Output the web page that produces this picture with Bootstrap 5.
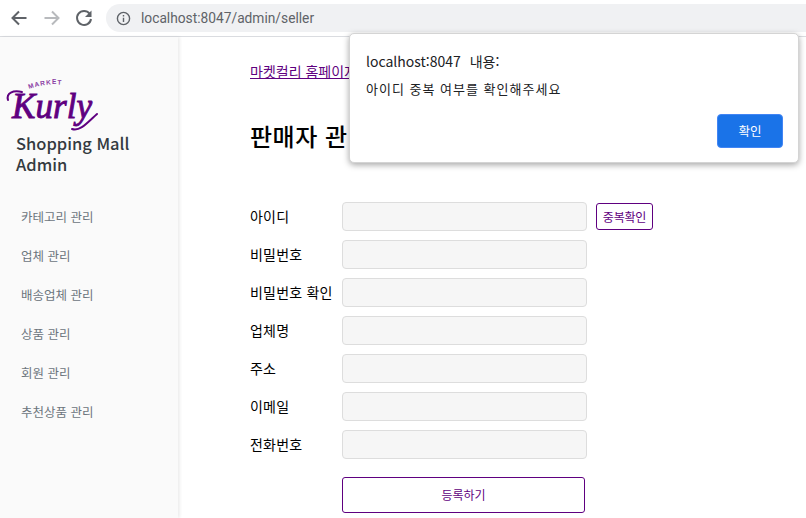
<!DOCTYPE html>
<html lang="ko">
<head>
<meta charset="utf-8">
<title>판매자 관리</title>
<link rel="stylesheet" href="https://cdn.jsdelivr.net/npm/bootstrap@5.3.0/dist/css/bootstrap.min.css">
<style>
html,body{height:518px;overflow:hidden}
body{font-family:"Noto Sans CJK KR","Liberation Sans",sans-serif;background:#fff;color:#000}
.chrome-bar{height:37px;border-bottom:1px solid #dadce0;background:#fff;padding-left:9px}
.nav-ico{width:20px;height:20px;flex:none}
.nav-fwd{margin-left:-3px}
.nav-rel{margin-left:-4px}
.omni{height:28px;width:900px;margin-left:12px;margin-top:4px;background:#f0f1f3;border-radius:14px 0 0 14px;font:13.75px "Roboto","Liberation Sans",sans-serif;color:#5f6368;padding-left:10px}
.omni span{color:#5f6368;margin-left:10px}
.page-wrap{height:481px}
.side{width:178px;flex:none;background:#fafafa;box-shadow:2px 0 3px rgba(0,0,0,.07);padding-top:41px}
.logo-svg{display:block;width:104px;height:54px}
.brand-name{font-size:16.5px;line-height:21px;font-weight:500;color:#343a40;margin:1px 0 0 16px;width:140px}
.side-menu{margin-top:22px;padding-left:21px}
.side-menu a{display:block;height:39px;line-height:39px;font-size:12.5px;color:#6c757d;text-decoration:none}
.main-area{padding:23px 0 0 72px;flex:1;min-width:0}
.top-link{font-size:14px;line-height:22px;color:#5f0080;text-decoration:underline;display:block}
.page-title{font-size:24px;font-weight:500;line-height:32px;margin:38px 0 0;color:#000;letter-spacing:.5px}
.reg-form{margin-top:50px}
.reg-row{height:38px;display:flex;align-items:flex-start}
.reg-row label{width:92px;flex:none;font-size:14px;line-height:29px;color:#000;white-space:nowrap;letter-spacing:.2px}
.reg-input{width:245px;height:29px;background:#f6f6f6;border:1px solid #ddd;border-radius:4px;flex:none}
.dup-btn{margin:1px 0 0 9px;width:57px;height:27px;border:1px solid #5f0080;border-radius:3px;background:#fff;color:#5f0080;font-size:12px;padding:0;letter-spacing:-.2px}
.submit-btn{display:block;margin:9px 0 0 92px;width:243px;height:36px;border:1px solid #5f0080;border-radius:3px;background:#fff;color:#5f0080;font-size:12px;padding:0}
.alert-box{position:absolute;left:349px;top:33px;width:450px;height:130px;background:#fff;border-radius:5px;border:1px solid #d4d4d4;box-shadow:0 2px 6px rgba(0,0,0,.35);padding:16px 16px 0;font-family:"Noto Sans CJK KR","Liberation Sans",sans-serif}
.alert-head{font-size:14px;line-height:22px;color:#202124;word-spacing:5px}
.alert-msg{font-size:13px;line-height:20px;color:#202124;margin-top:7px;letter-spacing:1px}
.alert-ok{position:absolute;right:15px;bottom:14px;width:66px;height:34px;background:#1a73e8;border:1px solid #4285f4;border-radius:4px;color:#fff;font-size:12.5px;padding:0}
</style>
</head>
<body>
<div class="chrome-bar d-flex align-items-start overflow-hidden">
  <div class="d-flex align-items-center gap-3 mt-2">
    <svg class="nav-ico" viewBox="0 0 20 20" fill="none" stroke="#5f6368" stroke-width="2"><path d="M17.5 10H4M10 3.5 3.5 10l6.5 6.5"/></svg>
    <svg class="nav-ico nav-fwd" viewBox="0 0 20 20" fill="none" stroke="#b8babd" stroke-width="2"><path d="M2.5 10H16M10 3.5l6.500 6.500L10 16.500"/></svg>
    <svg class="nav-ico nav-rel" viewBox="0 0 20 20" fill="none"><path d="M15.600 5.700A7 7 0 1 0 17 11" stroke="#5f6368" stroke-width="2"/><path d="M17.500 2.500v6.500H11z" fill="#5f6368"/></svg>
  </div>
  <div class="omni d-flex align-items-center">
    <svg width="15" height="15" viewBox="0 0 16 16" fill="none" stroke="#5f6368" stroke-width="1.500"><circle cx="8" cy="8" r="6.500"/><path d="M8 7.200v4.500M8 4.300v1.500"/></svg>
    <span>localhost:8047/admin/seller</span>
  </div>
</div>
<div class="page-wrap d-flex">
  <aside class="side">
    <svg class="logo-svg" viewBox="0 0 104 54" aria-label="Market Kurly">
      <defs><path id="arc" d="M29 11Q50 3 76 9"/></defs>
      <text font-family="Liberation Sans" font-weight="700" font-size="6.500" letter-spacing="1" fill="#8a3ca3"><textPath href="#arc">MARKET</textPath></text>
      <text x="12" y="40" font-family="Liberation Serif" font-style="italic" font-size="36" textLength="80" lengthAdjust="spacingAndGlyphs" fill="#5f0080" stroke="#5f0080" stroke-width=".9">Kurly</text>
      <path d="M8 22C6 15 13 12 22 14M72 51C80 54 88 44 97 36" fill="none" stroke="#5f0080" stroke-width="2" stroke-linecap="round"/>
    </svg>
    <div class="brand-name">Shopping Mall Admin</div>
    <nav class="side-menu">
      <a href="#">카테고리 관리</a>
      <a href="#">업체 관리</a>
      <a href="#">배송업체 관리</a>
      <a href="#">상품 관리</a>
      <a href="#">회원 관리</a>
      <a href="#">추천상품 관리</a>
    </nav>
  </aside>
  <main class="main-area">
    <a class="top-link" href="#">마켓컬리 홈페이지로 이동</a>
    <h1 class="page-title">판매자 관리</h1>
    <form class="reg-form">
      <div class="reg-row"><label>아이디</label><input class="reg-input" type="text"><button class="dup-btn" type="button">중복확인</button></div>
      <div class="reg-row"><label>비밀번호</label><input class="reg-input" type="password"></div>
      <div class="reg-row"><label>비밀번호 확인</label><input class="reg-input" type="password"></div>
      <div class="reg-row"><label>업체명</label><input class="reg-input" type="text"></div>
      <div class="reg-row"><label>주소</label><input class="reg-input" type="text"></div>
      <div class="reg-row"><label>이메일</label><input class="reg-input" type="text"></div>
      <div class="reg-row"><label>전화번호</label><input class="reg-input" type="text"></div>
      <button class="submit-btn" type="button">등록하기</button>
    </form>
  </main>
</div>
<div class="alert-box">
  <div class="alert-head">localhost:8047 내용:</div>
  <div class="alert-msg">아이디 중복 여부를 확인해주세요</div>
  <button class="alert-ok" type="button">확인</button>
</div>
<script src="https://cdn.jsdelivr.net/npm/bootstrap@5.3.0/dist/js/bootstrap.bundle.min.js"></script>
</body>
</html>
